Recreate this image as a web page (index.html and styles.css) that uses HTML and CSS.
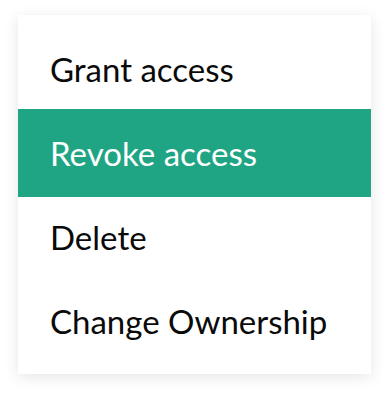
FILE: index.html
```html
<!DOCTYPE html>
<html lang="en">
<head>
<meta charset="utf-8">
<title>Menu</title>
<link rel="stylesheet" href="styles.css">
</head>
<body>
<ul class="menu">
  <li class="menu-item">Grant access</li>
  <li class="menu-item is-active">Revoke access</li>
  <li class="menu-item">Delete</li>
  <li class="menu-item">Change Ownership</li>
</ul>
</body>
</html>
```
FILE: styles.css
```css
html, body {
  margin: 0;
  padding: 0;
  background: #ffffff;
}
body {
  padding: 15px 18px 20px 18px;
  font-family: Lato, "Open Sans", sans-serif;
}
.menu {
  list-style: none;
  margin: 0;
  padding: 12px 0 11px 0;
  width: 353px;
  background: #ffffff;
  box-shadow: 0 3px 14px rgba(0, 0, 0, 0.1);
  display: flex;
  flex-direction: column;
}
.menu-item {
  height: 84px;
  display: flex;
  align-items: center;
  padding-left: 32px;
  font-size: 33px;
  color: #0a0a0a;
  white-space: nowrap;
}
.menu-item.is-active {
  height: 88px;
  margin: -2px 0;
  background: #20a584;
  color: #ffffff;
}
```
